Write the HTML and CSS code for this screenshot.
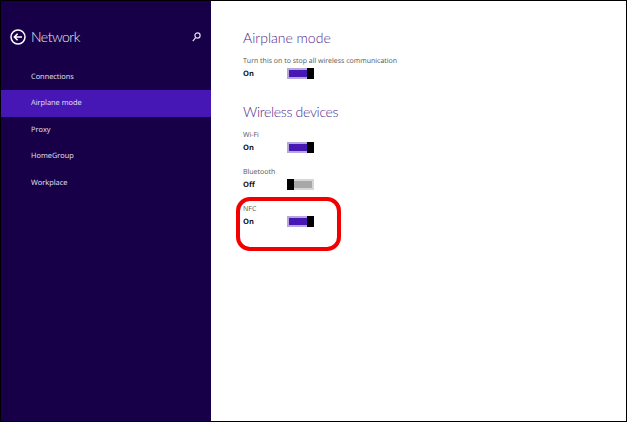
FILE: index.html
```html
<!DOCTYPE html>
<html lang="en">
<head>
    <meta charset="UTF-8">
    <title>Network settings</title>
    <link rel="stylesheet" href="styles.css">
</head>
<body>
    <div class="screen">
        <div class="sidebar">
            <div class="sidebar-head">
                <svg class="back-icon" width="16" height="16" viewBox="0 0 16 16" fill="none" stroke="#fff">
                    <circle cx="8" cy="8" r="7" stroke-width="1.5"/>
                    <path d="M12 8H4.5M7.6 4.8L4.4 8l3.2 3.2" stroke-width="1.6"/>
                </svg>
                <span class="sidebar-title">Network</span>
                <svg class="search-icon" width="9" height="10" viewBox="0 0 9 10" fill="none" stroke="#e4e0f0" stroke-width="1.2">
                    <circle cx="5.5" cy="3.5" r="2.6"/>
                    <path d="M3.6 5.6L.8 9.2"/>
                </svg>
            </div>
            <div class="nav">
                <div class="nav-item">Connections</div>
                <div class="nav-item selected">Airplane mode</div>
                <div class="nav-item">Proxy</div>
                <div class="nav-item">HomeGroup</div>
                <div class="nav-item">Workplace</div>
            </div>
        </div>

        <div class="content">
            <h2>Airplane mode</h2>
            <div class="setting">
                <div class="label">Turn this on to stop all wireless communication</div>
                <div class="state-row">
                    <span class="state">On</span>
                    <div class="toggle on"><div class="fill"></div><div class="knob"></div></div>
                </div>
            </div>

            <h2 class="second">Wireless devices</h2>
            <div class="setting">
                <div class="label">Wi-Fi</div>
                <div class="state-row">
                    <span class="state">On</span>
                    <div class="toggle on"><div class="fill"></div><div class="knob"></div></div>
                </div>
            </div>
            <div class="setting">
                <div class="label">Bluetooth</div>
                <div class="state-row">
                    <span class="state">Off</span>
                    <div class="toggle off"><div class="knob"></div><div class="fill"></div></div>
                </div>
            </div>
            <div class="setting">
                <div class="label">NFC</div>
                <div class="state-row">
                    <span class="state">On</span>
                    <div class="toggle on"><div class="fill"></div><div class="knob"></div></div>
                </div>
            </div>
        </div>

        <!-- red callout over the NFC row -->
        <div class="callout"></div>
    </div>
</body>
</html>
```

FILE: styles.css
```css
html, body {
    margin: 0;
    padding: 0;
}

body {
    background-color: white;
    font-family: "Open Sans", Roboto, sans-serif;
    text-rendering: geometricPrecision;
}

.screen {
    position: relative;
    display: flex;
    width: 627px;
    height: 422px;
    box-sizing: border-box;
    border: 1px solid black;
    overflow: hidden;
}

.sidebar {
    width: 210px;
    flex-shrink: 0;
    background-color: #180048;
    color: #e6e2f2;
}

.sidebar-head {
    display: flex;
    align-items: center;
    height: 20px;
    margin-top: 26px;
    padding-left: 9px;
}

.back-icon {
    margin-right: 5px;
}

.sidebar-title {
    padding-bottom: 1px;
    font-family: Lato, sans-serif;
    font-size: 14px;
    font-weight: 300;
    letter-spacing: -0.5px;
    color: #f0eef6;
}

.search-icon {
    margin-left: auto;
    margin-right: 10px;
}

.nav {
    margin-top: 17px;
}

.nav-item {
    height: 26.4px;
    line-height: 27px;
    padding-left: 30px;
    font-size: 7.4px;
}

.nav-item.selected {
    background-color: #4617b4;
}

.content {
    flex: 1;
    padding: 27px 0 0 32px;
    background-color: white;
}

h2 {
    margin: 0;
    height: 20px;
    line-height: 20px;
    font-family: Lato, sans-serif;
    font-size: 14px;
    font-weight: 300;
    color: #4c2a8c;
}

h2.second {
    margin-top: 17px;
    letter-spacing: -0.3px;
}

.setting {
    margin-top: 6px;
    height: 31px;
}

.label {
    height: 13px;
    line-height: 15px;
    font-size: 7px;
    color: #555;
}

.state-row {
    display: flex;
    align-items: center;
    height: 13px;
}

.state {
    width: 44px;
    font-size: 7.5px;
    font-weight: 700;
    color: #111;
}

.toggle {
    display: flex;
    width: 27px;
    height: 11px;
}

.toggle .fill {
    flex: 1;
    box-sizing: border-box;
}

.toggle.on .fill {
    background-color: #4617b4;
    border: 2px solid #b5a6dc;
    border-right: none;
}

.toggle.off .fill {
    background-color: #a8a8a8;
    border: 2px solid #d6d6d6;
    border-left: none;
}

.knob {
    width: 7px;
    background-color: black;
}

.callout {
    position: absolute;
    left: 235px;
    top: 196px;
    width: 97px;
    height: 46px;
    border: 4px solid #f20000;
    border-radius: 14px;
}
```
